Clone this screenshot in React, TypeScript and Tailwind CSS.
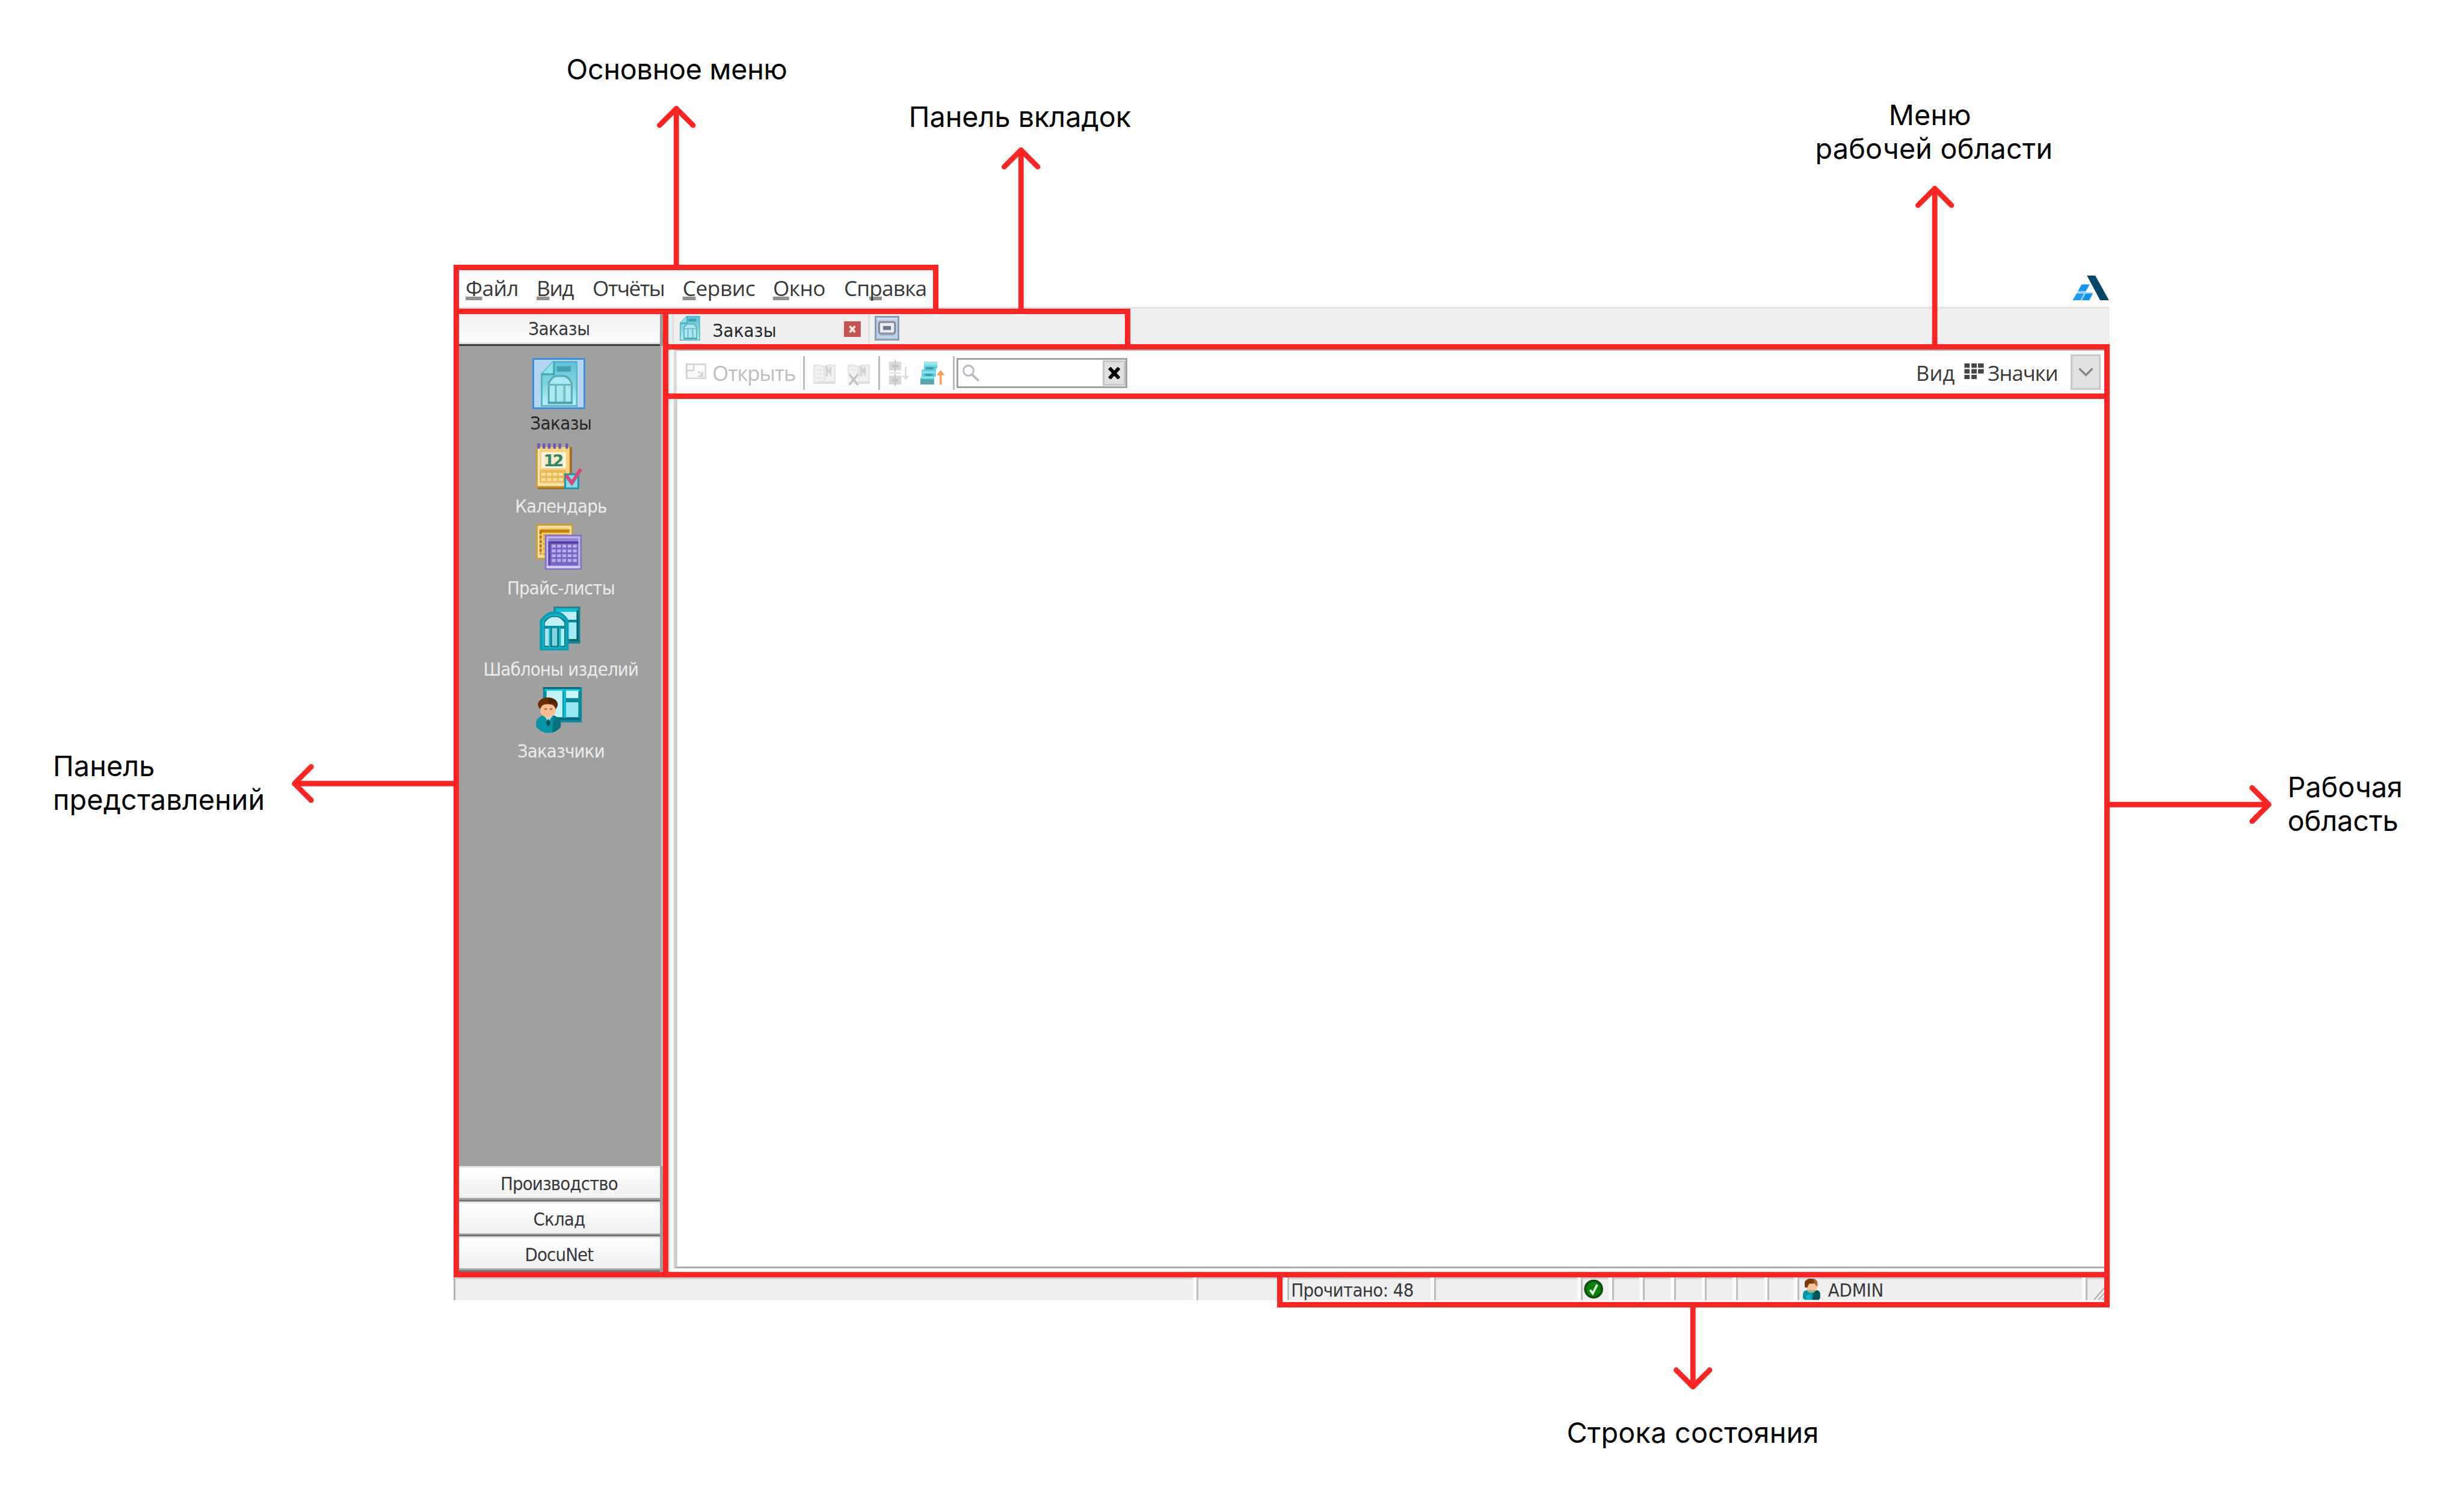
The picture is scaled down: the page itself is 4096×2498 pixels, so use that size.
import type { ReactNode } from "react";

/* ---------- Icons ---------- */

function OrdersIcon({ className }: { className: string }) {
  return (
    <svg className={className} viewBox="4 1 21 26" preserveAspectRatio="none">
      <defs>
        <linearGradient id="doc" x1="0" y1="0" x2="0" y2="1">
          <stop offset="0" stopColor="#5cc3d6" />
          <stop offset="0.5" stopColor="#80d6e2" />
          <stop offset="1" stopColor="#b9f1f7" />
        </linearGradient>
      </defs>
      <path d="M11 1.5H24.5V26.5H4.5V8.5Z" fill="url(#doc)" stroke="#5ab3c4" />
      <path d="M11 1.5V8.5H4.5Z" fill="#8fe3ee" />
      <path d="M11.5 1.5V8.5H4.5" fill="none" stroke="#45a3b4" />
      <rect x="13" y="4" width="8" height="3" fill="#429fb1" />
      <path d="M8.5 25V13.5Q10.5 9.5 13 9.5H17Q19.5 9.5 21.5 13.5V25Z" fill="#a9e9f2" stroke="#5aa5b2" />
      <path d="M8 14.5H22" stroke="#6cb4c0" />
      <path d="M12.5 15V24M17.5 15V24" stroke="#68adba" />
      <path d="M17 15V24" stroke="#8ec4cc" />
      <path d="M8 24.5H22" stroke="#4c9fae" />
    </svg>
  );
}

function CalendarIcon() {
  return (
    <svg className="h-108 w-104" viewBox="0 0 26 27">
      <rect x="1" y="3" width="19.5" height="24" fill="#97704f" />
      <rect x="1" y="3" width="19" height="23.5" fill="#b06a08" />
      <rect x="0" y="3" width="19" height="23" fill="#cf9c2e" />
      <rect x="1" y="3" width="18" height="22" fill="#f6d27c" />
      <rect x="1" y="3" width="1" height="22" fill="#faecc4" />
      <rect x="1" y="24" width="18" height="1" fill="#faecc4" />
      <path d="M1.5 1V4M4.5 1V4M7.5 1V4M10.5 1V4M13.5 1V4M17.5 1V4" stroke="#6d55bd" strokeWidth="1.5" />
      <rect x="3" y="6" width="14" height="9" fill="#fdf5e2" />
      <rect x="4.5" y="7" width="11" height="7" fill="#f4ecc8" />
      <text x="10" y="14" textAnchor="middle" fontFamily="DejaVu Sans" fontWeight="700" fontSize="9.2" textLength="11.5" fill="#2f8765">
        12
      </text>
      <rect x="2" y="16" width="15" height="7" fill="#ebb955" />
      <path d="M3 18.5H16M3 21.5H16" stroke="#f9dfa4" strokeWidth="1.6" strokeDasharray="2.4 0.9" />
      <rect x="16.5" y="18.5" width="7.5" height="8" fill="#7fdcec" stroke="#1f93a5" />
      <path d="M17 19L20.3 23.5L25.5 15.5" fill="none" stroke="#d9487b" strokeWidth="2" />
    </svg>
  );
}

function PriceListIcon() {
  const rows = [12.5, 15.2, 17.9, 20.6];
  return (
    <svg className="h-104 w-104" viewBox="0 0 26 26">
      <rect x="0.5" y="0.5" width="20" height="19" fill="#f3cd70" stroke="#cf9f33" />
      <rect x="1.5" y="1.5" width="18" height="17" fill="none" stroke="#f9e2a8" />
      <path d="M2 4H19" stroke="#c6820e" strokeWidth="1.8" />
      <path d="M2.6 4V17" stroke="#b9730a" strokeWidth="1.2" strokeDasharray="1.8 0.7" />
      <path d="M4 6.4H19M4 8.5H5M4 11H5M4 14H5M4 17H5" stroke="#e5ad3d" strokeWidth="1.4" strokeDasharray="2 1" />
      <rect x="5.5" y="6.5" width="20" height="19" fill="#9485d4" stroke="#8272c2" />
      <rect x="6.5" y="7.5" width="18" height="17" fill="none" stroke="#c3b8ee" />
      <path d="M6 24.4H25" stroke="#d9d2f6" strokeWidth="1.2" />
      <rect x="7" y="10" width="17" height="13.4" fill="#7a68c6" />
      <path d="M7 10.4H24" stroke="#4c389d" strokeWidth="1.2" />
      <path d="M7.6 10V23.4" stroke="#5a45ad" strokeWidth="1.2" />
      {rows.map((y) => (
        <path key={y} d={`M9 ${y}H24`} stroke="#bcb0ec" strokeWidth="1.6" strokeDasharray="2.1 0.9" />
      ))}
    </svg>
  );
}

function TemplatesIcon({ className }: { className: string }) {
  return (
    <svg className={className} viewBox="0 0 23 25">
      <rect x="8" y="0" width="15" height="21" fill="#0a8598" />
      <path d="M8 0.5H23" stroke="#3f7a82" />
      <rect x="9" y="1" width="13" height="2" fill="#06c0dc" />
      <rect x="10" y="3" width="11" height="4.5" fill="#bfeff5" />
      <rect x="13" y="9" width="8" height="9.5" fill="#a3e9f2" />
      <path d="M21.5 2V19" stroke="#06616d" />
      <path d="M12 19H22" stroke="#06616d" />
      <path d="M0.8 24.4V8Q4.5 3.6 7 3.6H10Q13 3.6 15.8 8V24.4Z" fill="#18b4c8" stroke="#089db3" strokeWidth="1.4" />
      <path d="M2.6 23V8.2Q5.5 5.4 7.4 5.4H9.6Q11.5 5.4 14.6 8.2V23Z" fill="#0c6f7c" />
      <path d="M3 11V9Q5.5 6 7.4 6H9.6Q11.5 6 14 9V11Z" fill="#c0f0f5" />
      <path d="M2 11.5H15" stroke="#0894a8" />
      <rect x="3" y="12.5" width="2.4" height="9.8" fill="#a5e5ee" />
      <rect x="7" y="12.3" width="3" height="10" fill="#7fd6e0" />
      <rect x="12" y="12.5" width="2" height="9.8" fill="#a5eff8" />
      <path d="M5.7 12V23M11.4 12V23" stroke="#18b7cd" />
    </svg>
  );
}

function CustomersIcon() {
  return (
    <svg className="h-104 w-104" viewBox="0 0 26 26">
      <rect x="4" y="0" width="22" height="20" fill="#078a9b" />
      <path d="M4 0.5H25" stroke="#14606b" />
      <rect x="5" y="1" width="20" height="1.3" fill="#08c3df" />
      <rect x="6" y="2" width="9" height="15" fill="#c3f3fa" />
      <rect x="15.6" y="1.4" width="1.3" height="17" fill="#08bcd6" />
      <rect x="17" y="2" width="7" height="4.2" fill="#cbf6fc" />
      <rect x="17" y="8.6" width="7" height="8.4" fill="#96e7f3" />
      <path d="M12 18H25" stroke="#056370" />
      <path d="M0 20Q0 17.5 4 16H10Q14 17.5 14 20V22.5Q11 26 7 26T0 22.5Z" fill="#0593a6" />
      <path d="M10 16Q14 17.5 14 20V22.5Q12 25 9 25.8Z" fill="#047181" />
      <path d="M4 15.5L7 19.5L10 15.5Z" fill="#aee3e6" />
      <path d="M7 18L8.2 20.5L7 22.5L5.8 20.5Z" fill="#03474f" />
      <ellipse cx="6.7" cy="9.8" rx="5.6" ry="3.9" fill="#6a2c02" />
      <path d="M7 6Q12.3 6.3 12.2 10.4L11 13L7 9Z" fill="#522102" />
      <ellipse cx="6.8" cy="13.2" rx="4.4" ry="3.9" fill="#fcbd8f" />
      <path d="M2 10.6Q6.5 8.6 11.6 10.6V9H2Z" fill="#6a2c02" />
      <path d="M4.8 12.4H6.2M7.8 12.4H9.2" stroke="#8a7862" strokeWidth="0.9" />
    </svg>
  );
}

function OpenIcon() {
  return (
    <svg className="h-36 w-47" viewBox="0 0 47 36">
      <rect x="2" y="2" width="43" height="32" fill="#fbfbfb" stroke="#d6d6d6" strokeWidth="4" />
      <path d="M18 2V16H2M28 18L38 28M38 18V29H27" fill="none" stroke="#d2d2d2" strokeWidth="3.5" />
    </svg>
  );
}

function CardIcon({ crossed }: { crossed?: boolean }) {
  return (
    <svg className="h-56 w-53" viewBox="0 0 53 56">
      <path d="M3 10H16L26 13L36 10H50V50H3Z" fill="#f1f1f1" stroke="#e6e6e6" strokeWidth="4" />
      <path d="M9 20H21M9 29H21M9 38H21" stroke="#e2e2e2" strokeWidth="3" />
      <path d="M26 12V46" stroke="#e3e3e3" strokeWidth="4" />
      <path d="M32 35V16L40 28V14" fill="none" stroke="#d3d3d3" strokeWidth="5" />
      <path d="M4 49H50" stroke="#dddddd" strokeWidth="5" />
      {crossed && (
        <>
          <path d="M0 28H26V56H0Z" fill="#f8f8f8" fillOpacity="0.7" />
          <path d="M5 30L25 54M25 30L5 54" stroke="#c4c4c4" strokeWidth="5" />
        </>
      )}
    </svg>
  );
}

function SortDownIcon() {
  return (
    <svg className="h-60 w-48" viewBox="0 0 48 60">
      <rect x="1" y="4" width="28" height="20" fill="#dadada" />
      <rect x="1" y="36" width="28" height="20" fill="#d8d8d8" />
      <path d="M8 14H22M8 46H22" stroke="#bfbfbf" strokeWidth="4" />
      <path d="M15 0V60" stroke="#cacaca" strokeWidth="3" />
      <path d="M2 30H28" stroke="#e2e2e2" strokeWidth="4" />
      <path d="M39 16V42M33 36L39 43L45 36" fill="none" stroke="#dcdcdc" strokeWidth="4" />
    </svg>
  );
}

function SortUpIcon() {
  return (
    <svg className="h-52 w-56" viewBox="0 0 56 52">
      <path d="M8 0H38V16H35V34H31V52H0V36H3V18H8Z" fill="#5cc8d6" />
      <path d="M8 3H38" stroke="#a4e8f0" strokeWidth="6" />
      <path d="M8 8H38" stroke="#7ddfe9" strokeWidth="5" />
      <path d="M4 24H35M2 36H31" stroke="#84e3ed" strokeWidth="5" />
      <path d="M13 15H29M11 30H27" stroke="#3b929f" strokeWidth="4" />
      <path d="M0 46H31" stroke="#55a7b2" strokeWidth="12" />
      <path d="M46 52V26" stroke="#f9a45c" strokeWidth="5" />
      <path d="M37 31L46 19L55 31Z" fill="#fb9b52" />
    </svg>
  );
}

function UserIcon() {
  return (
    <svg className="h-48 w-40" viewBox="0 0 40 48">
      <path d="M0 34Q2 26 12 26H28Q38 26 39 34V44L36 48H4L0 44Z" fill="#0795a8" />
      <path d="M24 26H28Q38 26 39 34V44L36 48H22Z" fill="#04535d" />
      <path d="M8 40V48H18V34Z" fill="#0cb6d0" />
      <path d="M8 26H32L24 32H14Z" fill="#9db98f" />
      <rect x="8" y="10" width="24" height="16" rx="6" fill="#fcc495" />
      <path d="M4 18V8Q8 0 18 0Q32 0 33 10V18L26 11L14 12L11 18V20H5Z" fill="#7a3a0c" />
      <path d="M24 2Q33 4 33 12V18L26 11Z" fill="#b3622b" />
    </svg>
  );
}

function CheckCircleIcon() {
  return (
    <svg className="h-44 w-44" viewBox="0 0 44 44">
      <circle cx="22" cy="21" r="19" fill="#078307" stroke="#0d4d0d" strokeWidth="5" />
      <path d="M14 23L20 31L30 11" fill="none" stroke="#e6f6e6" strokeWidth="5" />
    </svg>
  );
}

function WindowIcon() {
  return (
    <svg className="h-56 w-56" viewBox="0 0 56 56">
      <rect x="2" y="2" width="52" height="52" fill="#bdd0e8" stroke="#8b9ab3" strokeWidth="4" />
      <path d="M4 6H52" stroke="#d3dfef" strokeWidth="4" />
      <rect x="10" y="14" width="36" height="26" rx="4" fill="#ececf0" stroke="#7f879a" strokeWidth="4" />
      <path d="M12 42H44" stroke="#93a6c4" strokeWidth="4" />
      <rect x="19" y="23" width="18" height="9" fill="#6b768f" />
    </svg>
  );
}

function TilesIcon() {
  return (
    <svg className="h-36 w-47" viewBox="0 0 47 36" fill="#444444">
      <path d="M2 0H14V10H2ZM18 0H30V10H18ZM33 0H46V10H33ZM2 13H14V23H2ZM18 13H30V23H18ZM33 13H46V23H33ZM2 26H14V36H2ZM18 26H30V36H18Z" />
    </svg>
  );
}

function Logo() {
  return (
    <svg className="h-56 w-84" viewBox="0 0 84 56">
      <path d="M33 0H52L83 56H63Z" fill="#05476a" />
      <path d="M21 20H40L30 38H48L38 56H0Z" fill="#9dd2fa" />
      <path d="M21 20H39L30 35H13Z" fill="#1495f3" />
      <path d="M10 41H26L18 56H1Z" fill="#1d9bf4" />
      <path d="M30 41H46L38 56H22Z" fill="#0c93f2" />
    </svg>
  );
}

/* ---------- Application window ---------- */

const tahoma = "font-['DejaVu_Sans_Condensed','DejaVu_Sans',sans-serif] [font-stretch:condensed] text-[30.8px] leading-none whitespace-nowrap";
const segoe = "font-['Open_Sans',sans-serif] leading-none whitespace-nowrap";

function Hot({ children }: { children: string }) {
  return (
    <span className="underline decoration-[#909090] decoration-[6px] underline-offset-[1px] [text-decoration-skip-ink:none]">
      {children}
    </span>
  );
}

function MenuBar() {
  return (
    <nav className={`${segoe} flex h-96 items-center bg-white pt-9 pl-28 text-[35.2px] text-[#383838]`}>
      <div className="w-161 tracking-[-0.6px]"><Hot>Ф</Hot>айл</div>
      <div className="w-127 tracking-[-1.4px]"><Hot>В</Hot>ид</div>
      <div className="w-204 tracking-[-1.6px]">Отчёты</div>
      <div className="w-205 tracking-[-0.4px]"><Hot>С</Hot>ервис</div>
      <div className="w-161 tracking-[-0.5px]"><Hot>О</Hot>кно</div>
      <div className="tracking-[-0.8px]">Сп<Hot>р</Hot>авка</div>
      <div className="ml-auto flex">
        <Logo />
      </div>
    </nav>
  );
}

function SidebarItem({ icon, label, active }: { icon: ReactNode; label: string; active?: boolean }) {
  return (
    <div className="flex h-185 flex-col items-center">
      <div className="flex h-116 items-center justify-center">{icon}</div>
      <div
        className={`${tahoma} flex h-50 items-center pl-8 ${active ? "mt-7 tracking-[-0.45px] text-[#262626]" : "mt-10 tracking-[-0.8px] text-[#ececec]"}`}
      >
        {label}
      </div>
    </div>
  );
}

function SidebarButton({ label }: { label: string }) {
  return (
    <div className="flex h-80 flex-col">
      <div className="h-4 bg-[#e8e8e8]" />
      <div className={`${tahoma} flex h-68 items-center justify-center bg-linear-to-b from-white to-[#f0f0f0] pt-5 tracking-[-0.85px] text-[#36363c]`}>
        {label}
      </div>
      <div className="h-4 bg-[#a6a6a6]" />
      <div className="h-4 bg-[#767676]" />
    </div>
  );
}

function Sidebar() {
  return (
    <aside className="flex w-476 pl-12">
      <div className="flex w-456 flex-col">
        <div className={`${tahoma} flex h-76 items-center justify-center bg-linear-to-b from-[#f0f0f0] to-[#fdfdfd] pt-15 tracking-[-0.45px] text-[#36363c]`}>
          Заказы
        </div>
        <div className="h-4 bg-[#dcdcdc]" />
        <div className="h-4 bg-[#3c3c3c]" />
        <div className="flex-1 bg-[#a0a0a0] pt-28">
          <SidebarItem
            active
            label="Заказы"
            icon={
              <div className="flex h-116 w-120 items-center justify-center border-3 border-[#3c8fdc] bg-[#b3d6f4]">
                <OrdersIcon className="h-104 w-84" />
              </div>
            }
          />
          <SidebarItem label="Календарь" icon={<CalendarIcon />} />
          <SidebarItem label="Прайс-листы" icon={<PriceListIcon />} />
          <SidebarItem label="Шаблоны изделий" icon={<TemplatesIcon className="ml-4 h-100 w-92" />} />
          <SidebarItem label="Заказчики" icon={<CustomersIcon />} />
        </div>
        <SidebarButton label="Производство" />
        <SidebarButton label="Склад" />
        <SidebarButton label="DocuNet" />
        <div className="h-12 bg-[#9c9c9c]" />
      </div>
      <div className="flex w-8 flex-col">
        <div className="h-84 bg-[#9a9a9a]" />
        <div className="flex flex-1">
          <div className="flex-1 bg-[#a0a0a0]" />
          <div className="flex-1 bg-[#c8c8cb]" />
        </div>
        <div className="h-252 bg-[#9f9f9f]" />
      </div>
    </aside>
  );
}

function TabBar() {
  return (
    <div className="flex h-80 bg-[#efefef] pt-12 pl-20">
      <div className="flex h-68 w-445 items-center border-l-3 border-[#e2e2e6] pl-14">
        <OrdersIcon className="mb-4 h-56 w-46" />
        <span className={`${tahoma} w-326 pt-6 pl-28 tracking-[0.2px] text-[#262626]`}>Заказы</span>
        <svg className="h-36 w-38" viewBox="0 0 38 36">
          <rect width="38" height="36" fill="#c85252" />
          <path d="M13 11L25 25M25 11L13 25" stroke="#f8e6e6" strokeWidth="5" />
        </svg>
      </div>
      <div className="flex items-center border-l-3 border-[#e2e2e2] pb-4 pl-11">
        <WindowIcon />
      </div>
    </div>
  );
}

function Separator() {
  return <div className="h-76 w-4 bg-[#bcbcbc]" />;
}

function Toolbar() {
  return (
    <div className="flex h-112 pt-12 pl-12">
      <div className="w-4 bg-[#e4e4e4]" />
      <div className="w-8 bg-[#f8f8f8]" />
      <div className="flex flex-1 border-t-3 border-l-5 border-t-[#bcbcbc] border-l-[#dadade] pt-4 pl-20">
        <div className={`${segoe} flex flex-1 items-center text-[34.5px]`}>
          <div className="flex items-center">
            <div className="mb-8"><OpenIcon /></div>
            <span className="w-219 pl-14 tracking-[-1px] text-[#bdbdbd]">Открыть</span>
          </div>
          <Separator />
          <div className="flex items-center gap-24 pr-18 pl-19">
            <CardIcon />
            <CardIcon crossed />
          </div>
          <Separator />
          <div className="flex items-center gap-24 pr-17 pl-20">
            <SortDownIcon />
            <SortUpIcon />
          </div>
          <Separator />
          <div className="ml-4 flex h-68 w-388 items-center border-3 border-[#a2a2a2] bg-white">
            <svg className="ml-9 h-42 w-42" viewBox="0 0 42 42" fill="none" stroke="#b9b9c1">
              <circle cx="15" cy="15" r="11.5" strokeWidth="4" />
              <path d="M23 24L38 38" strokeWidth="5" />
            </svg>
            <div className="ml-auto flex h-58 w-52 items-center justify-center border-3 border-[#c6c6c6] bg-[#e1e1e1]">
              <svg className="h-28 w-28" viewBox="0 0 28 28">
                <path d="M3 2L25 26M25 2L3 26" stroke="#050505" strokeWidth="8" />
              </svg>
            </div>
          </div>
          <div className="ml-auto flex items-center pr-20 text-[#383838]">
            <span className="w-108 tracking-[0.2px]">Вид</span>
            <div className="mb-8"><TilesIcon /></div>
            <span className="w-196 pl-8 tracking-[-0.9px]">Значки</span>
            <div className="mb-4 flex h-80 w-68 items-center justify-center border-3 border-[#c8c8c8] bg-[#e1e1e1]">
              <svg className="h-20 w-34" viewBox="0 0 34 20">
                <path d="M2 2L17 17L32 2" fill="none" stroke="#848484" strokeWidth="4.5" />
              </svg>
            </div>
          </div>
        </div>
      </div>
    </div>
  );
}

function WorkArea() {
  return (
    <div className="flex flex-1 bg-[#f0f0f0] pb-20">
      <div className="w-12" />
      <div className="-mb-8 w-4 bg-[#e4e4e4]" />
      <div className="-mb-8 w-8 bg-[#f8f8f8]" />
      <div className="-mb-8 flex flex-1 bg-[#fcfcfc] pb-8">
        <div className="flex-1 border-b-3 border-l-6 border-b-[#a9abb5] border-l-[#cfcfd4] bg-white" />
      </div>
    </div>
  );
}

function StatusCell({ className, children }: { className: string; children?: ReactNode }) {
  return (
    <div className={`flex h-full ${className}`}>
      <div className="w-8 bg-[#fbfbfb]" />
      <div className="w-4 bg-[#bdbdbd]" />
      <div className="flex flex-1 items-center border-t-3 border-[#d0d0d0]">{children}</div>
    </div>
  );
}

function StatusBar() {
  return (
    <footer className={`${tahoma} flex h-52 bg-[#efefef] text-[#36363c]`}>
      <div className="h-full w-1678 border-t-3 border-l-3 border-t-[#d0d0d0] border-l-[#b4b4b4]" />
      <StatusCell className="w-206" />
      <StatusCell className="w-332">
        <span className="pt-4 pl-4 tracking-[-0.6px]">Прочитано: 48</span>
      </StatusCell>
      <StatusCell className="w-333" />
      <StatusCell className="w-71">
        <div className="pl-3"><CheckCircleIcon /></div>
      </StatusCell>
      <StatusCell className="w-70" />
      <StatusCell className="w-71" />
      <StatusCell className="w-70" />
      <StatusCell className="w-70" />
      <StatusCell className="w-72" />
      <StatusCell className="w-68" />
      <StatusCell className="w-653">
        <div className="-mt-1 flex items-center gap-17 pl-8">
          <UserIcon />
          <span className="pt-4 tracking-[-0.2px]">ADMIN</span>
        </div>
      </StatusCell>
      <StatusCell className="w-62">
        <svg className="mt-auto ml-15 h-28 w-24" viewBox="0 0 24 28" stroke="#b2b2b2" strokeWidth="3">
          <path d="M0 28L24 0M10 28L24 12M19 28L24 22" />
        </svg>
      </StatusCell>
    </footer>
  );
}

/* ---------- Annotations ---------- */

function Frame({ className }: { className: string }) {
  return <div className={`absolute border-9 border-[#ff2424] ${className}`} />;
}

function Caption({ className, children }: { className: string; children: ReactNode }) {
  return (
    <p className={`absolute font-['Inter',sans-serif] text-[46.7px] leading-[56.4px] whitespace-nowrap text-black ${className}`}>
      {children}
    </p>
  );
}

function Arrow({ className, viewBox, d }: { className: string; viewBox: string; d: string }) {
  return (
    <svg className={`absolute ${className}`} viewBox={viewBox} fill="none" stroke="#ff2424" strokeWidth="12" strokeLinejoin="round">
      <path d={d} strokeLinecap="round" />
    </svg>
  );
}

export default function App() {
  return (
    <main className="relative h-[2498px] w-[4096px] overflow-hidden bg-white [--spacing:0.733px]">
      <div className="pt-600 pl-1028">
        <div className="flex h-2348 w-3756 flex-col">
          <MenuBar />
          <div className="h-4 bg-[#e2e2e2]" />
          <div className="flex flex-1">
            <Sidebar />
            <div className="flex flex-1 flex-col">
              <TabBar />
              <Toolbar />
              <WorkArea />
            </div>
          </div>
          <StatusBar />
        </div>
      </div>

      <Frame className="top-600 left-1028 h-112 w-1100" />
      <Frame className="top-700 left-1028 h-2196 w-488" />
      <Frame className="top-700 left-1504 h-92 w-1060" />
      <Frame className="top-780 left-1504 h-124 w-3280" />
      <Frame className="top-892 left-1504 h-2004 w-3280" />
      <Frame className="top-2884 left-2896 h-80 w-1888" />

      <Arrow className="top-240 left-1490 h-362 w-88" viewBox="0 0 88 362" d="M44 362V6M6 44L44 6L82 44" />
      <Arrow className="top-334 left-2272 h-368 w-88" viewBox="0 0 88 368" d="M44 368V6M6 44L44 6L82 44" />
      <Arrow className="top-422 left-4344 h-362 w-88" viewBox="0 0 88 362" d="M44 362V6M6 44L44 6L82 44" />
      <Arrow className="top-1732 left-662 h-88 w-370" viewBox="0 0 370 88" d="M370 44H6M44 6L6 44L44 82" />
      <Arrow className="top-1780 left-4780 h-88 w-371" viewBox="0 0 371 88" d="M0 44H365M327 6L365 44L327 82" />
      <Arrow className="top-2960 left-3796 h-190 w-88" viewBox="0 0 88 190" d="M44 0V184M6 146L44 184L82 146" />

      <Caption className="top-119 left-1135 w-800 text-center tracking-[-0.25px]">Основное меню</Caption>
      <Caption className="top-226 left-1913 w-800 text-center">Панель вкладок</Caption>
      <Caption className="top-222 left-3986 w-800 text-center tracking-[0.2px]">
        Меню&nbsp;
        <br />
        рабочей области
      </Caption>
      <Caption className="top-1698 left-120 tracking-[0.15px]">
        Панель
        <br />
        представлений
      </Caption>
      <Caption className="top-1746 left-5188">
        Рабочая
        <br />
        область
      </Caption>
      <Caption className="top-3210 left-3439 w-800 text-center tracking-[0.25px]">Строка состояния</Caption>
    </main>
  );
}
